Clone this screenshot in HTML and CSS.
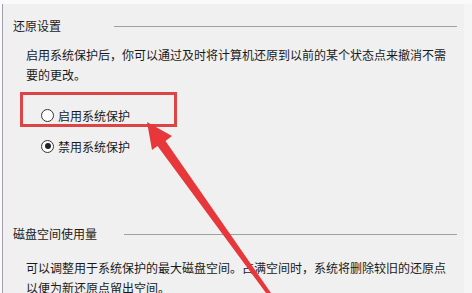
FILE: index.html
```html
<!DOCTYPE html>
<html lang="zh-CN">
<head>
<meta charset="utf-8">
<link rel="stylesheet" href="styles.css">
</head>
<body>
<div class="topstrip"></div>
<div class="frame">
  <div class="panel">
    <section class="group g1">
      <div class="legend"><span class="legend-text">还原设置</span><span class="rule"></span></div>
      <p class="desc">启用系统保护后，你可以通过及时将计算机还原到以前的某个状态点来撤消不需要的更改。</p>
      <div class="radios">
        <label class="radio"><span class="dot"></span><span>启用系统保护</span></label>
        <label class="radio checked"><span class="dot"></span><span>禁用系统保护</span></label>
      </div>
    </section>
    <section class="group g2">
      <div class="legend"><span class="legend-text">磁盘空间使用量</span><span class="rule"></span></div>
      <p class="desc">可以调整用于系统保护的最大磁盘空间。占满空间时，系统将删除较旧的还原点以便为新还原点留出空间。</p>
    </section>
  </div>
  <div class="edge"></div>
</div>
<div class="highlight"></div>
<svg class="arrow" width="472" height="293" viewBox="0 0 472 293">
  <polygon points="147,122 172,136 165.5,141 271,293 266,293 157.5,146 152,150" fill="#e8373a"/>
</svg>
</body>
</html>
```

FILE: styles.css
```css
html, body {
  margin: 0;
  padding: 0;
  width: 472px;
  height: 293px;
  overflow: hidden;
  background: #f0f0f0;
  font-family: "Noto Sans CJK SC", "Microsoft YaHei", sans-serif;
  font-size: 12px;
  color: #1a1a1a;
}
.topstrip {
  height: 4px;
  background: #fafafa;
}
.frame {
  display: flex;
  height: 289px;
  border-left: 2px solid #fafafa;
}
.panel {
  flex: 1;
  border-left: 1px solid #a49cab;
  padding-left: 10px;
  padding-right: 7px;
}
.edge {
  width: 8px;
  background: #f5f5f5;
}
.group {
  margin: 0;
}
.legend {
  display: flex;
  align-items: center;
  height: 20px;
  line-height: 20px;
}
.legend-text {
  white-space: nowrap;
}
.rule {
  flex: 1;
  height: 1px;
  background: #a0a0a0;
  margin-left: 53px;
}
.g1 .legend {
  margin-top: 12px;
}
.g2 .rule {
  margin-left: 27px;
}
.desc {
  margin: 9px 0 0 13px;
  line-height: 20px;
  width: 425px;
}
.radios {
  display: flex;
  flex-direction: column;
  gap: 11px;
  margin: 20px 0 0 28px;
}
.radio {
  display: flex;
  align-items: center;
  gap: 4px;
  height: 20px;
}
.dot {
  box-sizing: border-box;
  width: 13px;
  height: 13px;
  border: 1px solid #333;
  border-radius: 50%;
  background: #fff;
  position: relative;
}
.checked .dot::after {
  content: "";
  position: absolute;
  left: 2.5px;
  top: 2.5px;
  width: 6px;
  height: 6px;
  border-radius: 50%;
  background: #222;
}
.g2 {
  margin-top: 68px;
}
.g2 .desc {
  margin-top: 14px;
}
.highlight {
  position: absolute;
  left: 20px;
  top: 92px;
  width: 151px;
  height: 29px;
  border: 3px solid #dc4446;
}
.arrow {
  position: absolute;
  left: 0;
  top: 0;
}
```
